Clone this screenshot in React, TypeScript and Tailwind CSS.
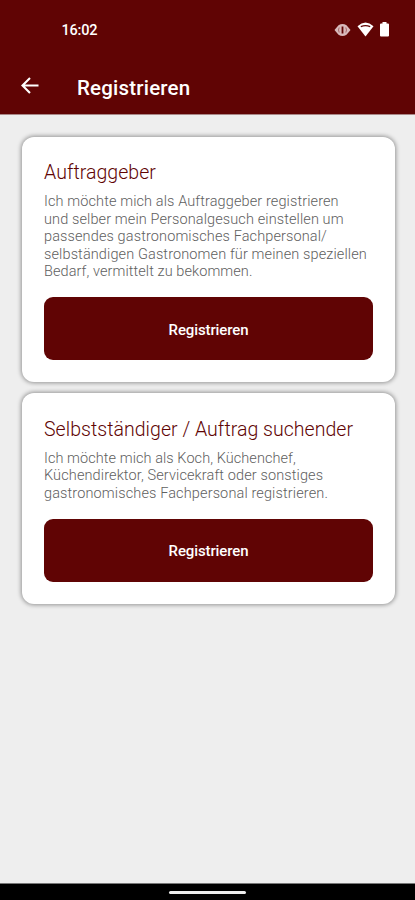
import React from "react";

type CopyLine = { text: string; tracking: string };

function Card({ title, titleTracking, lines, className }: { title: string; titleTracking: string; lines: CopyLine[]; className: string }) {
  return (
    <section className={`rounded-[12px] bg-white px-[22px] shadow-[0_0_4px_1px_rgba(0,0,0,0.38)] ${className}`}>
      <h2 className={`h-[33px] text-[19.5px] leading-[25px] font-light whitespace-nowrap text-[#600404] ${titleTracking}`}>{title}</h2>
      <div className="text-[14.5px] leading-[17.4px] font-light text-[#606060]">
        {lines.map(({ text, tracking }) => (
          <p key={text} className={`whitespace-nowrap ${tracking}`}>{text}</p>
        ))}
      </div>
      <button className="mt-[16.5px] flex h-[63px] w-full items-center justify-center rounded-[9px] bg-[#600404] pt-[3px] text-[15px] font-medium tracking-[-0.12px] text-white">
        Registrieren
      </button>
    </section>
  );
}

export default function App() {
  return (
    <main className="flex h-[900px] w-[415px] flex-col overflow-hidden bg-[#eeeeee] font-['Roboto',sans-serif]">
      <header className="h-[115px] shrink-0 border-b border-[#a88] bg-[#600404] text-white">
        <div className="flex h-[60px] items-center justify-between pr-[25px] pl-[61.5px]">
          <span className="pt-[1px] text-[14.5px] font-medium tracking-[-0.2px]">16:02</span>
          <div className="flex items-center gap-[5px]">
            <svg className="mr-[1px]" width="17" height="14" viewBox="0 0 17 14">
              <path d="M0.5 7 4.5 2.3Q8.5-.5 12.5 2.3L16.5 7l-4 4.7Q8.5 14.5 4.5 11.7z" fill="#d8b9bb" />
              <path d="M5.2 4.5Q3.8 7 5.2 9.5M11.8 4.5Q13.2 7 11.8 9.5" fill="none" stroke="#a5696b" strokeWidth="1" />
              <path d="M8.5 3.5v7" stroke="#600404" strokeWidth="1.8" />
            </svg>
            <svg className="-mt-[1px]" width="17" height="15" viewBox="0 0 17 15">
              <path d="M0.5 4.2Q8.5-3 16.5 4.2L8.5 14.5z" fill="white" />
              <path d="M3.8 4.6Q8.5 2.8 13.2 4.6" fill="none" stroke="#600404" strokeWidth="1.3" />
            </svg>
            <svg className="-mt-[1px]" width="11" height="15" viewBox="0 0 11 15"><path d="M3.5 0h4v1.5h1.5q1 0 1 1v11q0 1-1 1H2q-1 0-1-1v-11q0-1 1-1h1.5z" fill="white" /></svg>
          </div>
        </div>
        <div className="flex h-[54px] items-center pl-[21px]">
          <svg className="-mt-[3px]" width="18" height="17" viewBox="0 0 18 17" fill="none" stroke="white" strokeWidth="2.1"><path d="M17.5 8.5H2M9 1 1.5 8.5 9 16" /></svg>
          <h1 className="ml-[38px] pt-[2px] text-[20.5px] font-medium tracking-[0.2px]">Registrieren</h1>
        </div>
      </header>
      <div className="flex grow flex-col gap-[11.5px] pt-[22px] pr-[20px] pl-[22px]">
        <Card
          className="h-[244.5px] pt-[23.3px]"
          title="Auftraggeber"
          titleTracking="tracking-[0.05px]"
          lines={[
            { text: "Ich möchte mich als Auftraggeber registrieren", tracking: "tracking-[0.11px]" },
            { text: "und selber mein Personalgesuch einstellen um", tracking: "tracking-[0.11px]" },
            { text: "passendes gastronomisches Fachpersonal/", tracking: "tracking-[0.12px]" },
            { text: "selbständigen Gastronomen für meinen speziellen", tracking: "tracking-[0.12px]" },
            { text: "Bedarf, vermittelt zu bekommen.", tracking: "tracking-[0.08px]" },
          ]}
        />
        <Card
          className="h-[210.5px] pt-[24px]"
          title="Selbstständiger / Auftrag suchender"
          titleTracking="tracking-[0.04px]"
          lines={[
            { text: "Ich möchte mich als Koch, Küchenchef,", tracking: "tracking-[0.07px]" },
            { text: "Küchendirektor, Servicekraft oder sonstiges", tracking: "tracking-[0.12px]" },
            { text: "gastronomisches Fachpersonal registrieren.", tracking: "tracking-[0.13px]" },
          ]}
        />
      </div>
      <footer className="flex h-[17px] items-center justify-center border-t border-[#777] bg-black pt-[1px]">
        <span className="h-[3px] w-[77px] rounded-full bg-[#eee]" />
      </footer>
    </main>
  );
}
